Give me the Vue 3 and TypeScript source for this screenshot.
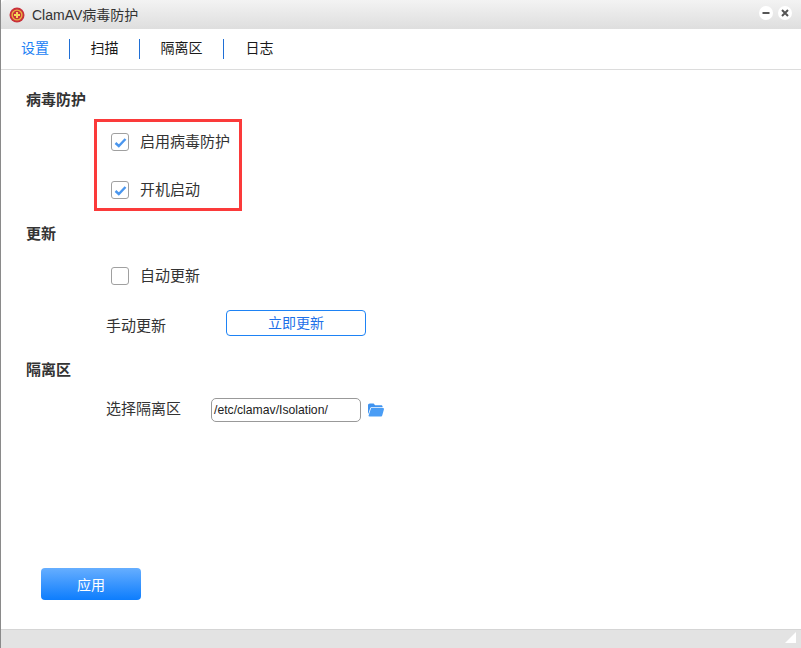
<script setup lang="ts">
const tabs = ['设置', '扫描', '隔离区', '日志']
</script>

<template>
  <div class="win">
    <header class="titlebar">
      <svg class="logo" viewBox="0 0 16 16" width="16" height="16">
        <circle cx="8" cy="8" r="7.500" fill="#c9303a" />
        <circle cx="8" cy="8" r="5.600" fill="#e8b33f" />
        <circle cx="8" cy="8" r="4.200" fill="#c9303a" />
        <path d="M8 5v6M5 8h6" stroke="#f6d65a" stroke-width="2" />
      </svg>
      <span class="title">ClamAV病毒防护</span>
      <div class="ctrls">
        <span class="ctrl"><svg viewBox="0 0 14 14" width="14" height="14"><circle cx="7" cy="7" r="7" fill="#fff"/><path d="M3.500 7h7" stroke="#555" stroke-width="2"/></svg></span>
        <span class="ctrl"><svg viewBox="0 0 14 14" width="14" height="14"><circle cx="7" cy="7" r="7" fill="#fff"/><path d="M4 4l6 6M10 4l-6 6" stroke="#555" stroke-width="2"/></svg></span>
      </div>
    </header>

    <nav class="tabs">
      <div v-for="(t, i) in tabs" :key="t" class="tab" :class="[{ active: i === 0 }, 'tab' + i]"><span>{{ t }}</span></div>
    </nav>

    <main class="content">
      <h2 class="heading first">病毒防护</h2>
      <div class="highlight">
        <label class="check"><span class="box"><svg viewBox="0 0 18 18" width="18" height="18"><path d="M4.500 10l3.300 3 6.700-7" fill="none" stroke="#4a96ee" stroke-width="2.400"/></svg></span><span class="text">启用病毒防护</span></label>
        <label class="check second"><span class="box"><svg viewBox="0 0 18 18" width="18" height="18"><path d="M4.500 10l3.300 3 6.700-7" fill="none" stroke="#4a96ee" stroke-width="2.400"/></svg></span><span class="text">开机启动</span></label>
      </div>

      <h2 class="heading update">更新</h2>
      <label class="check auto"><span class="box"></span><span class="text">自动更新</span></label>
      <div class="row manual">
        <span class="lbl">手动更新</span>
        <button class="outline">立即更新</button>
      </div>

      <h2 class="heading quarantine">隔离区</h2>
      <div class="row pick">
        <span class="lbl">选择隔离区</span>
        <div class="path">/etc/clamav/Isolation/</div>
        <svg class="folder" viewBox="0 0 17 14" width="16" height="14">
          <path d="M0 2C0 .8.8 0 2 0h4l1.500 2H14c1 0 1.500.6 1.500 1.500V4H4C3 4 2.500 4.500 2.200 5.300L.6 10.500 0 11Z" fill="#3f93f0"/>
          <path d="M3.300 5h12.400c.9 0 1.400.6 1.200 1.400l-1.700 6.300c-.2.800-.8 1.300-1.700 1.300H1.500c-.7 0-1.100-.5-.9-1.100Z" fill="#4a9df5"/>
        </svg>
      </div>

      <button class="apply">应用</button>
    </main>

    <footer class="status"><span class="grip"></span></footer>
  </div>
</template>

<style>
html, body { margin: 0; background: #fff; }
</style>

<style scoped>
.win {
  width: 801px;
  height: 648px;
  display: flex;
  flex-direction: column;
  background: #fff;
  overflow: hidden;
  box-sizing: border-box;
  border-left: 1px solid #8a8a8a;
  font-family: "Noto Sans CJK SC", "Liberation Sans", sans-serif;
  font-size: 15px;
  color: #333;
}
.titlebar {
  height: 29px;
  flex: none;
  display: flex;
  align-items: center;
  padding: 0 9px 0 8px;
  background: linear-gradient(#f3f3f3, #dedede);
  border-top-left-radius: 5px;
}
.logo { flex: none; }
.title {
  margin-left: 7px;
  margin-bottom: 2px;
  font-family: "Liberation Sans", "Noto Sans CJK SC", sans-serif;
  font-size: 14px;
  color: #333;
}
.ctrls { margin-left: auto; display: flex; gap: 5px; margin-top: -3px; }
.ctrl { width: 14px; height: 14px; display: block; }
.ctrl svg { display: block; }
.tabs {
  height: 40px;
  flex: none;
  display: flex;
  align-items: center;
  border-bottom: 1px solid #dcdcdc;
  box-sizing: content-box;
  margin-left: -1px;
}
.tab {
  color: #1a1a1a;
  font-size: 14px;
  height: 20px;
  display: flex;
  align-items: center;
  justify-content: center;
  box-sizing: border-box;
}
.tab span { margin-bottom: 4px; }
.tab0 { width: 70px; padding-left: 1px; }
.tab1 { width: 70px; }
.tab2 { width: 84px; }
.tab3 { width: 71px; }
.tab0, .tab1, .tab2 { border-right: 1px solid #1f6fd6; }
.active { color: #1a7ff5; }
.content {
  flex: 1;
  display: flex;
  flex-direction: column;
  align-items: flex-start;
  min-height: 0;
}
.heading {
  margin: 0 0 0 25px;
  font-size: 15px;
  line-height: 20px;
  font-weight: 700;
  color: #333;
}
.first { margin-top: 19px; }
.highlight {
  margin: 10px 0 0 93px;
  width: 148px;
  height: 92px;
  box-sizing: border-box;
  border: 3px solid #fb3a3a;
}
.check {
  display: flex;
  align-items: center;
  height: 20px;
  color: #333;
}
.text { margin-bottom: 3px; line-height: 20px; }
.box {
  width: 18px;
  height: 18px;
  box-sizing: border-box;
  border: 1px solid #a0a0a0;
  border-radius: 3px;
  margin-right: 11px;
  display: flex;
  align-items: center;
  justify-content: center;
  background: #fff;
  flex: none;
}
.box svg { flex: none; }
.highlight .check { margin-left: 14px; }
.highlight .check:first-child { margin-top: 10px; }
.second { margin-top: 28px; }
.update { margin-top: 12px; }
.auto { margin: 23px 0 0 110px; }
.row { display: flex; align-items: center; }
.manual { margin: 24px 0 0 105px; height: 26px; }
.lbl { line-height: 20px; }
.manual .lbl { width: 120px; margin-top: 4px; }
.outline {
  width: 140px;
  height: 26px;
  border: 1px solid #1e83f5;
  border-radius: 4px;
  background: #fff;
  color: #1e70e8;
  font: inherit;
  font-size: 14px;
  line-height: 20px;
  padding: 0 0 2px;
}
.quarantine { margin-top: 23px; }
.pick { margin: 19px 0 0 105px; height: 24px; }
.pick .lbl { width: 105px; margin-bottom: 5px; }
.path {
  width: 150px;
  height: 24px;
  box-sizing: border-box;
  border: 1px solid #999;
  border-radius: 5px;
  padding-left: 2px;
  font-family: "Liberation Sans", sans-serif;
  font-size: 12.2px;
  line-height: 22px;
  color: #222;
}
.folder { margin-left: 7px; }
.apply {
  margin: 146px 0 0 40px;
  width: 100px;
  height: 32px;
  border: none;
  border-radius: 4px;
  background: linear-gradient(#66aeff, #0d7dfd);
  color: #fff;
  font: inherit;
  font-size: 14px;
  line-height: 20px;
  padding: 0;
}
.status {
  height: 18px;
  flex: none;
  background: #e3e3e3;
  border-top: 1px solid #d5d5d5;
  position: relative;
}
.grip {
  position: absolute;
  right: 5px;
  bottom: 5px;
  width: 0;
  height: 0;
  border-left: 11px solid transparent;
  border-bottom: 11px solid #fff;
}
</style>
